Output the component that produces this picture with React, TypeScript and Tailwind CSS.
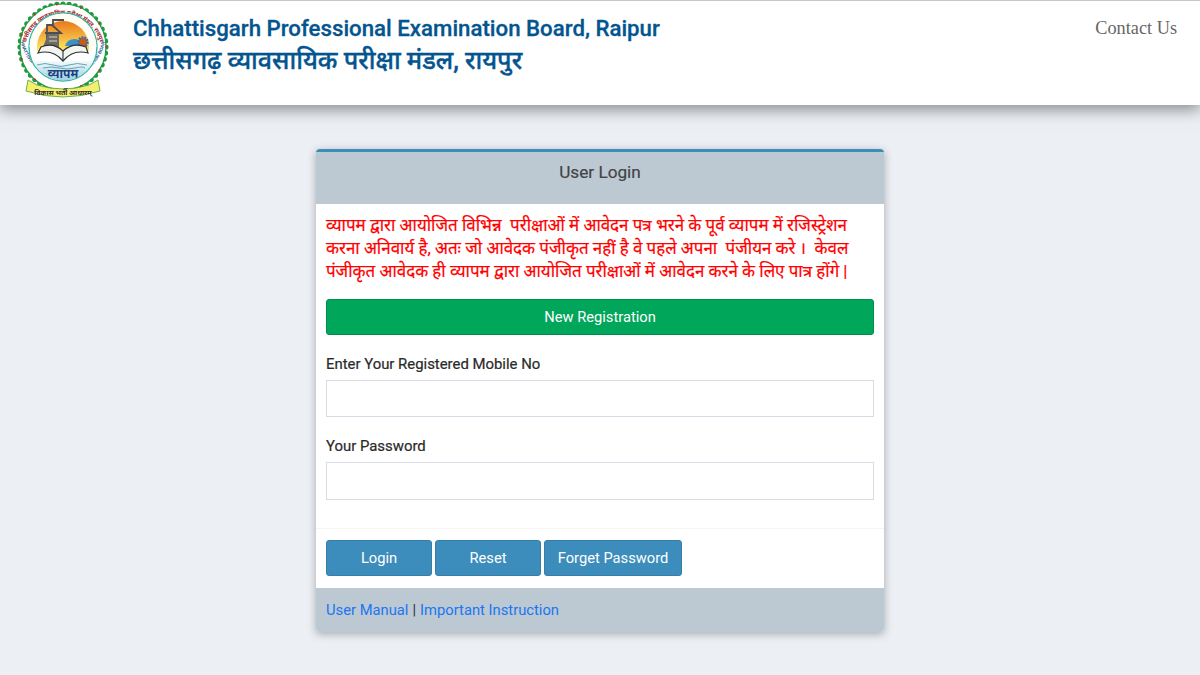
import React from 'react';

const Logo: React.FC = () => {
  const dots = Array.from({ length: 44 }, (_, i) => (i / 44) * Math.PI * 2);
  return (
    <svg width="98" height="100" viewBox="0 0 98 100" className="shrink-0">
      <defs>
        <path id="topArc" d="M 9.5 52 A 38.5 38.5 0 1 1 86.5 52" />
        <path id="bottomArc" d="M 6 40 A 42.5 42.5 0 0 0 90 40" />
        <linearGradient id="sky" x1="0" y1="0" x2="0" y2="1">
          <stop offset="0" stopColor="#e9781a" />
          <stop offset="1" stopColor="#fdeb5f" />
        </linearGradient>
        <linearGradient id="water" x1="0" y1="0" x2="0" y2="1">
          <stop offset="0" stopColor="#f3fafc" />
          <stop offset="1" stopColor="#8fcbe6" />
        </linearGradient>
        <clipPath id="inner">
          <circle cx="48" cy="46" r="33.5" />
        </clipPath>
      </defs>
      {/* scalloped green edge with red dots */}
      {dots.map((a, i) => (
        <circle key={i} cx={48 + 43 * Math.cos(a)} cy={46 + 43 * Math.sin(a)} r="2.6" fill="#1f9a3f" />
      ))}
      <circle cx="48" cy="46" r="43" fill="#ffffff" stroke="#1f9a3f" strokeWidth="1.2" />
      {dots.filter((_, i) => i % 4 === 0).map((a, i) => (
        <circle key={i} cx={48 + 43 * Math.cos(a)} cy={46 + 43 * Math.sin(a)} r="1" fill="#d8232a" />
      ))}
      <text fontSize="6" fontWeight="700" fill="#a3262a" fontFamily="'Noto Sans', sans-serif">
        <textPath href="#topArc" startOffset="50%" textAnchor="middle">छत्तीसगढ़ व्यावसायिक परीक्षा मंडल, रायपुर</textPath>
      </text>
      <text fontSize="4.6" fontWeight="700" fill="#1f4f8a" fontFamily="'Liberation Sans', sans-serif">
        <textPath href="#bottomArc" startOffset="50%" textAnchor="middle">CHHATTISGARH PROFESSIONAL EXAMINATION BOARD</textPath>
      </text>
      <circle cx="48" cy="46" r="34" fill="#ffffff" stroke="#38b6a5" strokeWidth="1.4" />
      <g clipPath="url(#inner)">
        <rect x="14" y="12" width="68" height="34" fill="#fffdf4" />
        <path d="M22 46 A26 26 0 0 1 74 46 V50 H22 Z" fill="url(#sky)" />
        <rect x="14" y="60" width="68" height="22" fill="url(#water)" />
        {/* crane and machinery */}
        <path d="M32 40 V24 H38 V19 H49 M37 24 L46 32 H30" fill="none" stroke="#4b4f55" strokeWidth="1.8" />
        <path d="M28 46 L33 33 H44 V46 Z" fill="#6d6a63" />
        <path d="M34 36 H42 M34 40 H42" stroke="#d8d3c4" strokeWidth="1" />
        {/* dome and gear */}
        <path d="M50 45 A10 10 0 0 1 69 45 Z" fill="#3d8fc4" />
        <circle cx="68" cy="41" r="4.6" fill="#c85a1c" stroke="#2f6eb0" strokeWidth="2.4" strokeDasharray="1.8 1" />
        {/* open book */}
        <path d="M26 46 Q38 41 48 50 Q58 41 71 46 L73 52 Q58 48 48 60 Q38 48 23 52 Z" fill="#f4f4f0" stroke="#2d3238" strokeWidth="1.2" />
        <path d="M48 50 V60" stroke="#2d3238" strokeWidth="1.1" />
        <path d="M22 64 Q30 61 38 64 T54 64 T72 64 M28 67 Q36 65 44 67 T60 67 T70 67" fill="none" stroke="#4a8f9c" strokeWidth="0.8" />
        <text x="48" y="77" textAnchor="middle" fontSize="12" fontWeight="700" fontStyle="italic" fill="#1d3f7a" fontFamily="'Noto Sans', sans-serif">व्यापम</text>
      </g>
      {/* ribbon */}
      <path d="M13 79 L22 84 Q48 92 74 84 L83 79 L85 90 Q48 102 11 90 Z" fill="#f6ef6e" stroke="#5ba745" strokeWidth="0.9" />
      <text x="48" y="94" textAnchor="middle" fontSize="7" fontWeight="700" fill="#2a2a2a" fontFamily="'Noto Sans', sans-serif">विकास भर्ती आधारम्</text>
    </svg>
  );
};

const App: React.FC = () => {
  return (
    <div className="min-h-[675px] bg-[#ecEff3] font-['Roboto','Noto_Sans',sans-serif]">
      {/* Header */}
      <header className="h-[105px] bg-white border-t border-[#c4c6c8] shadow-[0_5px_14px_rgba(60,64,70,0.55)] flex justify-between pl-[15px] pr-[23px]">
        <div className="flex">
          <div>
            <Logo />
          </div>
          <div className="ml-[20px] pt-[12px]">
            <h1 className="text-[22.25px] leading-[30px] font-medium text-[#04558f] [-webkit-text-stroke:0.3px_#04558f]">
              Chhattisgarh Professional Examination Board, Raipur
            </h1>
            <h2 className="mt-[2px] text-[25px] leading-[32px] font-medium text-[#04558f] [-webkit-text-stroke:0.4px_#04558f]">
              छत्तीसगढ़ व्यावसायिक परीक्षा मंडल, रायपुर
            </h2>
          </div>
        </div>
        <a className="mt-[15px] text-[18.3px] leading-[24px] text-[#666666] font-['Liberation_Serif',serif]">Contact Us</a>
      </header>

      {/* Login card */}
      <main className="flex justify-center pt-[44px]">
        <div className="w-[568px] rounded-[4px] border-t-[3px] border-[#3c8dbc] bg-white shadow-[0_2px_8px_rgba(60,64,70,0.4)] overflow-hidden">
          <div className="h-[52px] bg-[#bcc9d3] flex items-center justify-center pb-[11px]">
            <h3 className="text-[17.2px] text-[#444444] [-webkit-text-stroke:0.2px_#444444]">User Login</h3>
          </div>

          <div className="px-[10px] pt-[10px]">
            <p className="text-[16.95px] leading-[23px] text-[#ff0000] [-webkit-text-stroke:0.2px_#ff0000] whitespace-pre-wrap">
              व्यापम द्वारा आयोजित विभिन्न  परीक्षाओं में आवेदन पत्र भरने के पूर्व व्यापम में रजिस्ट्रेशन करना अनिवार्य है, अतः जो आवेदक पंजीकृत नहीं है वे पहले अपना  पंजीयन करे ।  केवल पंजीकृत आवेदक ही व्यापम द्वारा आयोजित परीक्षाओं में आवेदन करने के लिए पात्र होंगे |
            </p>

            <button className="mt-[16px] w-full h-[36px] bg-[#00a65a] border border-[#008d4c] rounded-[3px] text-white text-[14.7px]">
              New Registration
            </button>

            <div className="mt-[17px]">
              <label className="block text-[14.9px] leading-[24px] text-[#2a2a2a] [-webkit-text-stroke:0.2px_#2a2a2a]">Enter Your Registered Mobile No</label>
              <input type="text" className="mt-[4px] block w-full h-[37px] bg-white border border-[#d9dbe6]" />
            </div>

            <div className="mt-[17px]">
              <label className="block text-[14.9px] leading-[24px] text-[#2a2a2a] [-webkit-text-stroke:0.2px_#2a2a2a]">Your Password</label>
              <input type="password" className="mt-[4px] block w-full h-[38px] bg-white border border-[#d9dbe6]" />
            </div>
          </div>

          <div className="mt-[28px] border-t border-[#f4f4f4] px-[10px] pt-[11px] pb-[12px] flex gap-[3px]">
            <button className="w-[106px] h-[36px] bg-[#3c8dbc] border border-[#367fa9] rounded-[3px] text-white text-[14.7px]">Login</button>
            <button className="w-[106px] h-[36px] bg-[#3c8dbc] border border-[#367fa9] rounded-[3px] text-white text-[14.7px]">Reset</button>
            <button className="w-[138px] h-[36px] bg-[#3c8dbc] border border-[#367fa9] rounded-[3px] text-white text-[14.7px]">Forget Password</button>
          </div>

          <div className="h-[44px] bg-[#bcc9d3] flex items-center px-[10px] text-[14.75px] text-[#333333]">
            <a className="text-[#1a76f2]">User Manual</a>
            <span className="mx-[4px]">|</span>
            <a className="text-[#1a76f2]">Important Instruction</a>
          </div>
        </div>
      </main>
    </div>
  );
};

export default App;
